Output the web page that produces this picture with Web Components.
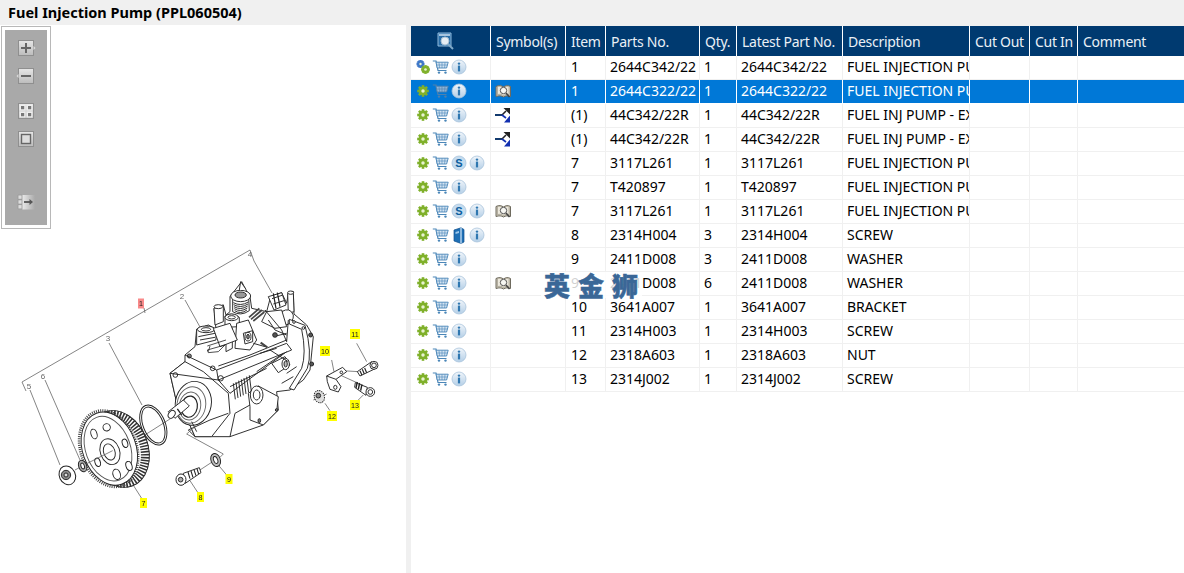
<!DOCTYPE html>
<html><head><meta charset="utf-8"><style>
html,body{margin:0;padding:0;background:#fff;overflow:hidden}
body{width:1184px;height:573px;font-family:"Noto Sans","Open Sans",sans-serif}
</style></head><body>
<parts-page>
  <title-bar slot="title">Fuel Injection Pump (PPL060504)</title-bar>
  <viewer-toolbar slot="left"></viewer-toolbar>
  <pump-diagram slot="left"></pump-diagram>
  <parts-table slot="right"></parts-table>
</parts-page>
<script>
const cols='80px 75px 40px 94px 37px 106px 127px 60px 48px 106px';
const gearPath=(cx,cy,r,c)=>{let s='';for(let i=0;i<4;i++){s+=`<rect x="${cx-1.3}" y="${cy-r}" width="2.6" height="${r*2}" fill="${c}" transform="rotate(${i*45} ${cx} ${cy})"/>`;}
 return s+`<circle cx="${cx}" cy="${cy}" r="${r*.76}" fill="${c}"/><circle cx="${cx}" cy="${cy}" r="${r*.3}" fill="#e8f2d0"/>`;};
const cart=(stroke,fill)=>`<path d="M.8 2H4L6 11.5H14.5" fill="none" stroke="${stroke}" stroke-width="1.2"/><path d="M4 3.2H16.2L14.6 9H5.2Z" fill="${fill}" stroke="${stroke}" stroke-width=".9"/><path d="M7 3.4L7.6 9M10 3.4V9M13 3.4L12.6 9M4.6 6H15.4" stroke="${stroke}" stroke-width=".6" fill="none"/><circle cx="7" cy="13.6" r="1.2" fill="${stroke}"/><circle cx="13.5" cy="13.6" r="1.2" fill="${stroke}"/>`;
const disc=`<defs><linearGradient id="d" x1="0" y1="0" x2="0" y2="1"><stop offset="0" stop-color="#f0f5fa"/><stop offset="1" stop-color="#b4cfe7"/></linearGradient></defs><circle cx="8" cy="8" r="7" fill="url(#d)" stroke="#a9c4dc" stroke-width=".8"/>`;
const book=`<path d="M1 3.5C4 2 6.5 2.5 8.5 4C10.5 2.5 13 2 15.5 3.5V13.5C13 12.5 10.5 12.7 8.5 14C6.5 12.7 4 12.5 1 13.5Z" fill="#cfc9b8" stroke="#6e6a5e"/><path d="M2.5 4V11.6C4.5 11 6.5 11.2 8.5 12.4C10.5 11.2 12.5 11 14 11.6V4" fill="#ece8dc" stroke="#8a8678" stroke-width=".5"/><circle cx="8.5" cy="7.5" r="3.2" fill="#f7f7f3" stroke="#555"/><path d="M11 10L14.5 14" stroke="#444" stroke-width="1.5"/>`;
const ICONS={
 gear:[14,14,gearPath(7,7,5.8,'#7fb02a')],
 gears:[14,16,gearPath(4.5,5,4,'#3f78c8')+gearPath(9.5,10.5,4.4,'#7fb02a')],
 cart:[17,16,cart('#4a86b8','#d3e3f1')],
 cartsel:[17,16,cart('#4f80ac','#8db4d8')],
 info:[16,16,disc+`<circle cx="8" cy="4.6" r="1.2" fill="#2f77b0"/><rect x="6.9" y="6.6" width="2.2" height="5.8" fill="#2f77b0"/>`],
 s:[16,16,`<circle cx="8" cy="8" r="7" fill="#c5dcef" stroke="#a9c4dc" stroke-width=".8"/><text x="8" y="12" text-anchor="middle" font-family="Liberation Sans" font-weight="700" font-size="11" fill="#0d5f9f">S</text>`],
 manual:[16,17,`<path d="M3 3L10 .8L13 2.5V15L10 16.5L3 14Z" fill="#1e6fb5" stroke="#0f4f8c" stroke-width=".7"/><path d="M10 .8V16.5" stroke="#bcd8ef" stroke-width="1.4"/><path d="M4.5 5L8 4V6L4.5 7Z" fill="#9cc6ea"/>`],
 book:[17,16,book],
 branch:[16,16,`<path d="M0 8H7" stroke="#123a6e" stroke-width="2"/><path d="M7 8L11 4" stroke="#222" stroke-width="1.6" fill="none"/><path d="M8.5 1H15V7.5Z" fill="#222"/><path d="M7 8L11 11" stroke="#1230b0" stroke-width="1.6"/><path d="M9 15.5L15 8.5V15.5Z" fill="#1230b0"/>`]
};
function def(name,html,init){customElements.define(name,class extends HTMLElement{constructor(){super();this.attachShadow({mode:'open'}).innerHTML=typeof html==='function'?html(this):html;}connectedCallback(){init&&init(this)}});}

def('ui-icon','',el=>{const i=ICONS[el.getAttribute('name')];el.shadowRoot.innerHTML=`<style>:host{display:block;line-height:0;flex:none}</style><svg xmlns="http://www.w3.org/2000/svg" width="${i[0]}" height="${i[1]}" viewBox="0 0 ${i[0]} ${i[1]}">${i[2]}</svg>`;});

def('parts-page',`<style>
:host{display:grid;width:1184px;height:573px;grid-template-rows:25px 1fr;grid-template-columns:406px 5px 1fr;background:#fff}
.t{grid-column:1/4}.l{display:flex;flex-direction:column;overflow:hidden;position:relative}.s{background:#f0f0f0}.r{overflow:hidden;padding-top:1px;background:linear-gradient(#f0f0f0 1px,#fff 1px)}
.wm{position:absolute;left:541px;top:272px;width:101px;height:26px;background:rgba(255,255,255,.82);color:#3a6797;font:900 26px/26px "Noto Sans CJK SC",sans-serif;letter-spacing:8px;padding-left:3px;box-sizing:border-box;white-space:nowrap;-webkit-text-stroke:.5px #3a6797}
</style><div class="t"><slot name="title"></slot></div><div class="l"><slot name="left"></slot></div><div class="s"></div><div class="r"><slot name="right"></slot></div><div class="wm">英金狮</div>`);

def('title-bar',`<style>:host{display:block;height:25px;background:#f0f0f0;padding-left:8px;font:700 14.5px/25px "Noto Sans",sans-serif;color:#000}</style><slot></slot>`);

const box=`<rect x=".5" y=".5" width="15" height="15" fill="url(#b)" stroke="#8f8f8f"/>`;
const tb={
 plus:box+`<path d="M3 8H13M8 3V13" stroke="#666" stroke-width="2"/><path d="M15.5 6L17.5 8L15.5 10" fill="#ddd"/>`,
 minus:box+`<path d="M3 8H13" stroke="#666" stroke-width="2"/><path d="M.5 6L-1.5 8L.5 10" fill="#ddd"/>`,
 grid:box+`<path d="M1.5 1.5h6v6h-6zM8.5 1.5h6v6h-6zM1.5 8.5h6v6h-6zM8.5 8.5h6v6h-6z" fill="#eee"/><path d="M3 3h3.2v3.2h-3.2zM10 3h3.2v3.2h-3.2zM3 10h3.2v3.2h-3.2zM10 10h3.2v3.2h-3.2z" fill="#777"/>`,
 square:box+`<rect x="3.5" y="3.5" width="9" height="9" fill="#ddd" stroke="#666" stroke-width="1.4"/>`,
 panel:`<g transform="translate(-1,-1)"><path d="M1 1h4v4.3h-4zM1 5.8h4v4.3h-4zM1 10.6h4v4.3h-4z" fill="#ddd" stroke="#999" stroke-width=".8"/><path d="M5.5 1H18V15.5H5.5Z" fill="url(#c)"/><path d="M7 8H14" stroke="#555" stroke-width="1.8"/><path d="M12.5 5L16 8L12.5 11Z" fill="#555"/></g>`};
def('tool-btn','',el=>{el.shadowRoot.innerHTML=`<style>:host{display:block;line-height:0;width:18px;height:16px;margin-left:13px}svg{overflow:visible;display:block}</style><svg width="18" height="16" viewBox="0 0 18 16"><defs><linearGradient id="b" x1="0" y1="0" x2="0" y2="1"><stop offset="0" stop-color="#e6e6e6"/><stop offset="1" stop-color="#bcbcbc"/></linearGradient><linearGradient id="c" x1="0" y1="0" x2="1" y2="0"><stop offset="0" stop-color="#e8e8e8"/><stop offset="1" stop-color="#a9a9a9"/></linearGradient></defs>${tb[el.getAttribute('name')]}</svg>`;});
def('viewer-toolbar',`<style>:host{display:block;flex:none;box-sizing:border-box;width:50px;height:203px;margin:1px 0 0 1px;border:1px solid #b8b8b8;padding:3px;background:#fff}
.i{background:#a9a9a9;height:195px;display:flex;flex-direction:column}
.a{margin-top:10px}.g12{margin-top:12px}.g18{margin-top:19px}.g48{margin-top:48px}</style>
<div class="i"><tool-btn class="a" name="plus"></tool-btn><tool-btn class="g12" name="minus"></tool-btn><tool-btn class="g18" name="grid"></tool-btn><tool-btn class="g12" name="square"></tool-btn><tool-btn class="g48" name="panel"></tool-btn></div>`);

// ---- diagram
const lab=(x,y,t,c='#ffff00',w)=>{const W=w||(t.length>1?10:7);return `<rect x="${x-W/2}" y="${y-5}" width="${W}" height="10" fill="${c}"/><text x="${x}" y="${y+2.6}" text-anchor="middle" font-family="Liberation Sans" font-size="7.2" fill="#222">${t}</text>`;};
const gt=(x,y,t)=>`<text x="${x}" y="${y}" text-anchor="middle" font-family="Liberation Sans" font-size="8" fill="#666">${t}</text>`;
let holes='';[[290,292,11,11],[252,312,9,15],[345,340,8,13],[357,408,9,14],[320,433,11,16],[263,397,8,13]].forEach(h=>{holes+=`<ellipse cx="${h[0]}" cy="${h[1]}" rx="${h[2]}" ry="${h[3]}" transform="rotate(-18 ${h[0]} ${h[1]})"/>`});
const coils=[188,194,200,206,212].map((y,i)=>`<path d="M${250+i} ${y}Q272 ${y+12} ${295-i} ${y-2}"/>`).join('');
const ribs=[250,258,266,274,282,290,298].map((x,i)=>`<path d="M${x} ${430-i*4}L${x+6} ${478-i*4}"/>`).join('');
const diagram=`<style>:host{display:block;flex:none;line-height:0}svg{display:block}</style>
<svg xmlns="http://www.w3.org/2000/svg" width="406" height="344" viewBox="0 229 406 344"><defs><filter id="bl" x="-5%" y="-5%" width="110%" height="110%"><feGaussianBlur stdDeviation=".3"/></filter></defs>
<g filter="url(#bl)">
<g fill="none" stroke="#666" stroke-width=".8">
<path d="M26 391L22 382L250 250L254 261L272 293"/><path d="M30 390L60 465M45 380L80 460M109 343L142 405M185 300L200 327M144 308L145 313"/>
</g>
<g transform="translate(150,240) scale(.3333)" stroke="#222" stroke-width="2.8" fill="none" stroke-linejoin="round">
<path fill="#fff" d="M60 400L105 365V345L135 320L140 268L175 255L198 268L192 205L220 195L228 225L240 215V170L275 125L288 150L300 170L305 205L350 215L362 170L395 158L410 190L415 160L430 155L432 222L470 255L490 290L480 390L460 420L420 450L380 455L385 510L340 555L240 590L135 590L115 545L85 510Z"/>
<g fill="#fff">
<path d="M85 510L60 400L105 365L160 395L235 460L240 520L185 590H135L115 545Z"/>
<ellipse cx="130" cy="490" rx="54" ry="66" transform="rotate(10 130 490)"/><ellipse cx="124" cy="495" rx="43" ry="55" transform="rotate(10 124 495)" stroke="#666"/><ellipse cx="120" cy="498" rx="32" ry="42" transform="rotate(10 120 498)" stroke="#666"/><ellipse cx="118" cy="500" rx="24" ry="32" transform="rotate(10 118 500)" stroke-width="3.5"/>
<path d="M55 515L100 480L118 498L75 535Z"/><ellipse cx="65" cy="523" rx="9" ry="13" transform="rotate(35 65 523)"/><path d="M82 507L95 525" stroke-width="4"/>
<circle cx="76" cy="405" r="7"/><circle cx="188" cy="385" r="7"/><circle cx="212" cy="415" r="8"/><circle cx="118" cy="348" r="6" fill="#888"/>
<path d="M248 172V215Q272 230 298 212L296 172"/>
<ellipse cx="272" cy="168" rx="30" ry="17"/><ellipse cx="272" cy="165" rx="17" ry="9" fill="#999"/><path d="M268 150L272 125L288 148"/>
<path d="M192 205L220 195V245L195 255Z"/><ellipse cx="205" cy="200" rx="13" ry="6"/>
<path d="M225 228Q245 215 268 232V260L225 262Z"/><ellipse cx="245" cy="232" rx="20" ry="10"/><ellipse cx="245" cy="232" rx="11" ry="5"/>
<path d="M228 275L247 265V325L228 335Z"/><ellipse cx="238" cy="270" rx="10" ry="6"/>
<path d="M140 268Q165 250 198 268V300L140 315Z"/><ellipse cx="168" cy="268" rx="26" ry="10"/><ellipse cx="168" cy="268" rx="14" ry="5"/><path d="M145 290L195 280M150 300L195 292"/>
<path d="M355 170L395 158L408 195L372 210Z"/><path d="M370 160L378 205M382 158L390 200" stroke-width="3.6"/><path d="M366 176L396 166M370 192L402 182"/>
<path d="M413 160L430 155L432 215L415 220Z"/><ellipse cx="422" cy="158" rx="9" ry="5"/>
<path d="M395 215Q420 200 430 225Q432 245 410 255Q395 240 395 215Z"/>
<path d="M350 215L395 210L410 260L375 265L335 245Z"/>
<path d="M418 238L465 256Q488 340 472 385L432 450L418 445L455 385Q470 340 455 268L418 252Z"/><circle cx="432" cy="246" r="4"/><circle cx="460" cy="264" r="4"/>
<path d="M260 250L295 240L320 300L300 330L255 325Z"/><path d="M190 265L240 250L262 300L210 320Z"/>
<path d="M280 280L308 272V305L285 312Z"/><ellipse cx="294" cy="290" rx="9" ry="13"/><ellipse cx="294" cy="290" rx="4" ry="7" fill="#888"/>
<path d="M365 370L405 350L420 375L385 398Z"/><ellipse cx="407" cy="372" rx="11" ry="17"/><ellipse cx="407" cy="372" rx="5" ry="9" fill="#bbb"/>
<path d="M300 500L295 460L325 438L385 470L380 515L340 555L300 540Z"/><ellipse cx="320" cy="465" rx="19" ry="27"/><ellipse cx="320" cy="465" rx="10" ry="15"/>
</g>
${coils}
<path stroke-width="5" stroke="#444" d="M297 232L328 205M303 238L336 210M310 243L343 216"/>
<path stroke-width="2.4" d="M172 318L228 300M172 330L225 315L205 335L175 338ZM175 335L180 318"/>
${ribs}
<path d="M105 345L200 390L410 310L425 330L205 420L60 400M200 390L205 420L240 460M240 460L410 335M310 310L345 320M320 395L400 340M345 210L395 270L410 305L415 240M355 240L375 270L410 285M370 290L410 280M240 590L255 520L300 495M135 590L115 570L180 540L235 520M125 545L140 575M330 340L380 325M205 378L300 345M300 345L410 300M240 440L350 385M360 330L415 365M410 400L440 380M395 430L430 410"/>
<circle cx="375" cy="285" r="7" fill="#555"/><path stroke-width="6" stroke="#444" d="M332 308L352 322"/><circle cx="482" cy="285" r="6" fill="#555"/><circle cx="485" cy="372" r="6" fill="#555"/>
<ellipse cx="328" cy="542" rx="4" ry="6" fill="#777"/><circle cx="380" cy="510" r="4" fill="#777"/>
<g stroke="#666" stroke-width="2.4"><path d="M545 360L552 395M620 310L650 365M625 480L640 465M540 512L525 490M490 480L530 462M570 405L625 430M575 392L625 395"/></g>
<path fill="#fff" d="M530 408L578 382L590 395L558 418L573 440L565 456L540 448L532 425Z"/><circle cx="574" cy="397" r="4" fill="#fff"/><ellipse cx="556" cy="442" rx="5" ry="6" fill="#fff"/><path d="M530 408L558 418"/>
<path fill="#fff" d="M622 395L665 365L678 385L630 408Z"/><path stroke-width="3.4" d="M630 392L636 406M637 388L643 402M644 384L650 398"/><circle cx="672" cy="376" r="12" fill="#fff"/><circle cx="672" cy="376" r="7"/>
<path fill="#fff" d="M616 428L652 442L648 466L614 442Z"/><path stroke-width="4.2" d="M622 426L618 444M629 429L625 448M636 433L632 452"/><circle cx="661" cy="456" r="13" fill="#fff"/><circle cx="661" cy="456" r="7"/>
<ellipse cx="508" cy="470" rx="15" ry="19" fill="#ddd" stroke-dasharray="4 2.5" transform="rotate(-20 508 470)"/><circle cx="505" cy="467" r="7" fill="#888"/>
</g>
<g transform="translate(10,330) scale(.3333)" stroke="#222" stroke-width="2.8" fill="none" stroke-linejoin="round">
<path stroke="#666" stroke-width="2.4" d="M555 290L530 312L640 372L630 382M365 458L395 505M540 452L565 490M625 405L650 435M570 420L605 397M400 318L483 265M195 420L210 412"/>
<ellipse cx="430" cy="285" rx="36" ry="63" transform="rotate(-22 430 285)"/><ellipse cx="430" cy="285" rx="30" ry="57" transform="rotate(-22 430 285)"/>
<ellipse cx="326" cy="357" rx="88" ry="118" transform="rotate(-20 326 357)" fill="#fff"/>
<ellipse cx="324" cy="357" rx="78" ry="106" transform="rotate(-20 324 357)" stroke="#333" stroke-width="26" stroke-dasharray="4.5 4"/>
<ellipse cx="296" cy="356" rx="84" ry="118" transform="rotate(-20 296 356)" stroke-width="8" stroke="#444" stroke-dasharray="3 3.5"/>
<ellipse cx="298" cy="356" rx="80" ry="113" transform="rotate(-20 298 356)" fill="#fff"/>
<ellipse cx="294" cy="356" rx="67" ry="100" transform="rotate(-20 294 356)" fill="#fff" stroke="#555"/>
<g fill="#fff">${holes}</g>
<ellipse cx="300" cy="365" rx="29" ry="40" transform="rotate(-20 300 365)" fill="#fff"/><ellipse cx="298" cy="366" rx="17" ry="25" transform="rotate(-20 298 366)" fill="#fff"/>
<path stroke="#666" stroke-width="2.4" d="M228 402L308 362"/>
<ellipse cx="218" cy="408" rx="12" ry="18" transform="rotate(-20 218 408)" fill="#aaa"/><ellipse cx="218" cy="408" rx="5" ry="9" transform="rotate(-20 218 408)" fill="#fff"/>
<ellipse cx="172" cy="436" rx="24" ry="29" transform="rotate(-25 172 436)" fill="#fff" stroke-width="3"/><circle cx="168" cy="435" r="14" fill="#888"/><circle cx="168" cy="435" r="6" fill="#ddd"/>
<path fill="#fff" d="M520 430L568 413L573 428L526 460Z"/><path stroke-width="3.2" d="M534 426L540 446M543 423L549 442M552 419L558 437M561 416L566 432"/><ellipse cx="513" cy="449" rx="15" ry="17" fill="#fff" stroke-width="3"/><circle cx="512" cy="449" r="7" fill="#aaa"/>
<ellipse cx="617" cy="390" rx="14" ry="20" transform="rotate(-20 617 390)" fill="#bbb"/><ellipse cx="617" cy="390" rx="6" ry="11" transform="rotate(-20 617 390)" fill="#fff"/>
</g>
${gt(29,389,'5')}${gt(43,379,'6')}${gt(108,341,'3')}${gt(182,299,'2')}${gt(250,257,'4')}
${lab(141,303.5,'1','#f98a8a',6)}
${lab(355,334,'11')}${lab(325,351,'10')}${lab(332,416,'12')}${lab(355,405,'13')}
${lab(143.5,503,'7','#ffff00',7)}${lab(200.5,497,'8','#ffff00',7)}${lab(229,479,'9','#ffff00',7)}
</g></svg>`;
def('pump-diagram',diagram);

// ---- table
const cellCss=`:host{display:grid;grid-template-columns:${cols};}
.c{box-sizing:border-box;border-right:1px solid #f0f0f0;overflow:hidden;white-space:nowrap;padding-left:5px}`;
def('table-head',`<style>${cellCss}:host{height:30px;background:#003a70;color:#eaf0f6;font:14px/31px "Noto Sans",sans-serif;letter-spacing:-.02em}
.c{border-right:1px solid #fff;height:30px}.c.f{display:flex;justify-content:center;align-items:center;padding:0 10px 0 0}.n{border-right:0}
svg{display:block}</style>
<div class="c f"><svg width="18" height="18" viewBox="0 0 18 18"><path d="M1 1H14V14H1Z" fill="#2a6ea8" stroke="#8fb9db"/><path d="M2 3h11" stroke="#cfe2f2" stroke-width="1.5"/><circle cx="8" cy="9" r="4" fill="#e6eef5" stroke="#a8c0d4"/><path d="M11 12L16 17" stroke="#7fa8c8" stroke-width="2"/></svg></div><div class="c">Symbol(s)</div><div class="c">Item</div><div class="c">Parts No.</div><div class="c">Qty.</div><div class="c">Latest Part No.</div><div class="c">Description</div><div class="c">Cut Out</div><div class="c">Cut In</div><div class="c n">Comment</div>`);
def('parts-row','',el=>{const g=a=>el.getAttribute(a)||'';
 const ic=g('icons').split(' ').filter(Boolean).map(n=>`<ui-icon name="${n}"></ui-icon>`).join('');
 const sy=g('symbol')?`<ui-icon name="${g('symbol')}"></ui-icon>`:'';
 el.shadowRoot.innerHTML=`<style>${cellCss}:host{height:24px;font:14px/22px "Noto Sans",sans-serif;color:#000}
 :host([selected]){color:#fff;background:#0078d7}
 .c{height:24px;border-bottom:1px solid #f0f0f0}
 :host([selected]) .c{border-color:#fff}
 .n{border-right:0}.c.i{display:flex;align-items:center;gap:2px;padding:0 0 1px 5px}.c.y{display:flex;align-items:center;padding:0 0 2px 4px}
 .t4{padding-left:4px}</style>
 <div class="c i">${ic}</div><div class="c y">${sy}</div><div class="c">${g('item')}</div><div class="c t4">${g('no')}</div><div class="c t4">${g('qty')}</div><div class="c t4">${g('latest')}</div><div class="c t4">${g('desc')}</div><div class="c"></div><div class="c"></div><div class="c n"></div>`;});
const R=[
['gears cart info','', '1','2644C342/22','1','2644C342/22','FUEL INJECTION PUMP'],
['gear cartsel info','book','1','2644C322/22','1','2644C322/22','FUEL INJECTION PUMP',1],
['gear cart info','branch','(1)','44C342/22R','1','44C342/22R','FUEL INJ PUMP - EX'],
['gear cart info','branch','(1)','44C342/22R','1','44C342/22R','FUEL INJ PUMP - EX'],
['gear cart s info','','7','3117L261','1','3117L261','FUEL INJECTION PUMP'],
['gear cart info','','7','T420897','1','T420897','FUEL INJECTION PUMP'],
['gear cart s info','book','7','3117L261','1','3117L261','FUEL INJECTION PUMP'],
['gear cart manual info','','8','2314H004','3','2314H004','SCREW'],
['gear cart info','','9','2411D008','3','2411D008','WASHER'],
['gear cart info','book','9','2411D008','6','2411D008','WASHER'],
['gear cart info','','10','3641A007','1','3641A007','BRACKET'],
['gear cart info','','11','2314H003','1','2314H003','SCREW'],
['gear cart info','','12','2318A603','1','2318A603','NUT'],
['gear cart info','','13','2314J002','1','2314J002','SCREW']];
def('parts-table',`<style>:host{display:block}</style><table-head></table-head>`+R.map(r=>`<parts-row icons="${r[0]}" symbol="${r[1]}" item="${r[2]}" no="${r[3]}" qty="${r[4]}" latest="${r[5]}" desc="${r[6]}"${r[7]?' selected':''}></parts-row>`).join(''));
</script>
</body></html>
